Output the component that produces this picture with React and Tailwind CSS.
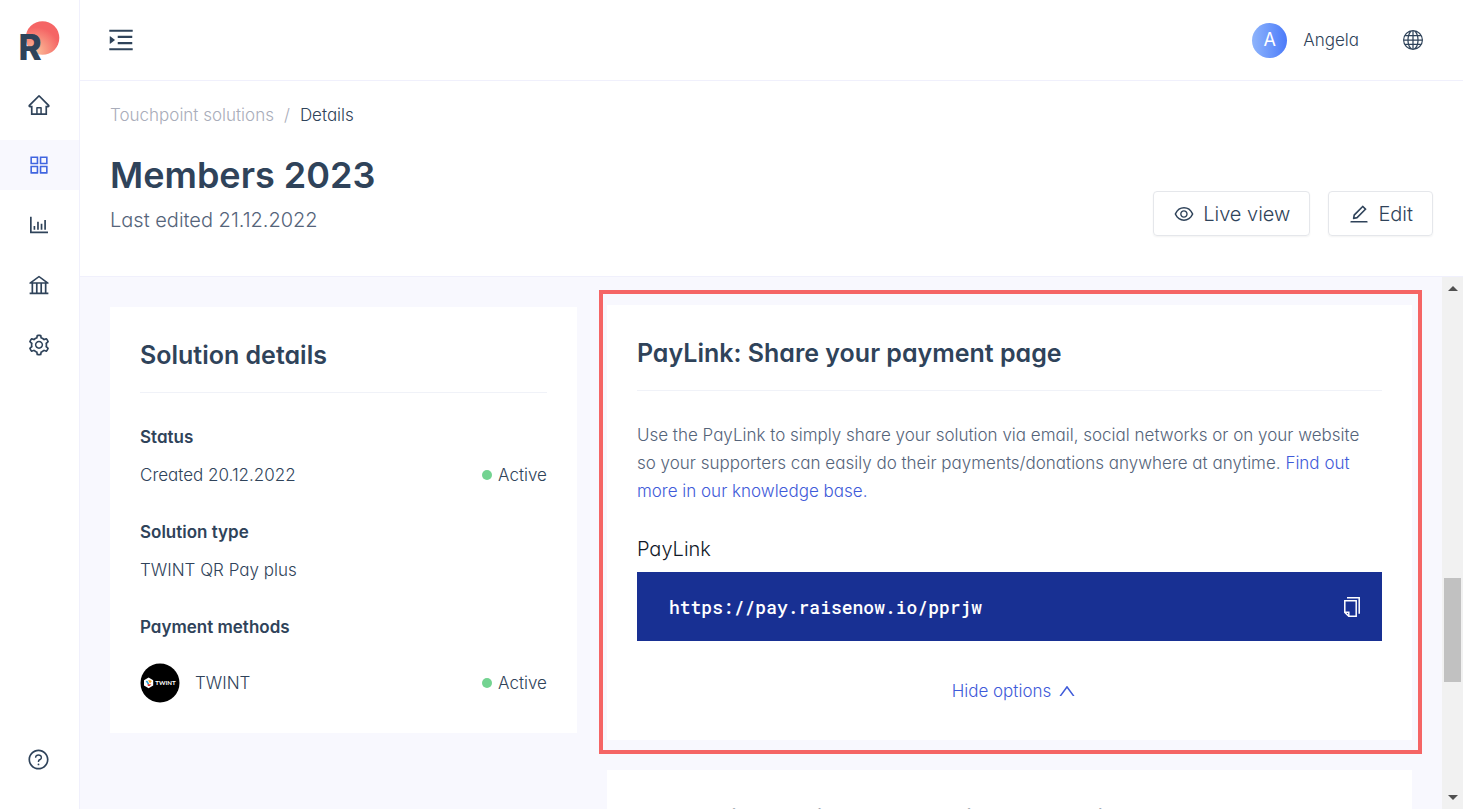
import {
  AiOutlineAppstore,
  AiOutlineBank,
  AiOutlineBarChart,
  AiOutlineEdit,
  AiOutlineEye,
  AiOutlineHome,
  AiOutlineMenuUnfold,
  AiOutlineQuestionCircle,
  AiOutlineSetting,
  AiOutlineUp,
} from 'react-icons/ai';
import { BsGlobe } from 'react-icons/bs';

const navItems = [
  { label: 'Home', icon: AiOutlineHome },
  { label: 'Touchpoint solutions', icon: AiOutlineAppstore, active: true },
  { label: 'Reports', icon: AiOutlineBarChart },
  { label: 'Bank', icon: AiOutlineBank },
  { label: 'Settings', icon: AiOutlineSetting },
];

function Logo() {
  return (
    <svg viewBox="0 0 40 40" className="size-10 overflow-visible" aria-hidden="true">
      <defs>
        <radialGradient id="sun" cx="0.3" cy="0.9" r="0.8">
          <stop offset="0" stopColor="#fbc09a" />
          <stop offset="0.9" stopColor="#f56565" />
        </radialGradient>
      </defs>
      <circle cx="22.5" cy="18" r="16.8" fill="url(#sun)" />
      <text x="-1.6" y="39.5" fontSize="35" fontWeight="800" fontFamily="Inter, sans-serif" fill="#2f435a">R</text>
    </svg>
  );
}

function TwintBadge() {
  return (
    <svg viewBox="0 0 40 40" className="size-10" aria-hidden="true">
      <circle cx="20" cy="20" r="19.5" fill="#000" />
      <path d="M8.6 14.6 13.2 17.2v5.4l-4.6 2.7L4 22.6v-5.4z" fill="#fff" />
      <path d="M5.6 18 8.2 22l1-1.2-1.8-3z" fill="#2ba6df" />
      <path d="M8 17.2 10 20.4l1.8-2.2-1.4-1z" fill="#f6a21c" />
      <path d="M7.4 21.2h4l-1.6 1.8H8z" fill="#e6332a" />
      <text x="15.2" y="22.4" fontSize="6.2" fontWeight="700" fontFamily="Lato, sans-serif" fill="#fff">TWINT</text>
    </svg>
  );
}

function CopyIcon() {
  return (
    <svg viewBox="0 0 18 22" className="h-5.5 w-4.5" fill="none" stroke="currentColor" strokeWidth="1.5" aria-hidden="true">
      <path d="M4 1.8h12.2v16" />
      <path d="M1.8 4.8h11.4v15.4H5.8l-4-3.8z" />
      <path d="M1.8 16.2h4v4" />
    </svg>
  );
}

function Sidebar() {
  return (
    <aside className="flex w-20 shrink-0 flex-col items-center border-r border-[#f0f0fc] pt-5 pb-9.5">
      <a href="#" aria-label="Dashboard"><Logo /></a>
      <nav className="mt-5 flex w-full flex-col gap-2.5">
        {navItems.map(({ label, icon: Icon, active }) => (
          <a key={label} href="#" aria-label={label}
            className={`flex h-12.5 items-center justify-center pr-0.5 ${active ? 'bg-[#f8f8fe] text-[#4065e0]' : ''}`}>
            <Icon className="size-6" />
          </a>
        ))}
      </nav>
      <button aria-label="Help" className="mt-auto mr-0.5"><AiOutlineQuestionCircle className="size-5.75" /></button>
    </aside>
  );
}

function Active() {
  return (
    <span className="flex items-center gap-1.5">
      <span className="size-2.5 rounded-full bg-[#73d391]" />
      Active
    </span>
  );
}

function CardTitle({ children }) {
  return <h2 className="border-b border-[#f0f2f8] pb-4.75 text-[25px] leading-9 font-semibold">{children}</h2>;
}

function SolutionDetails() {
  return (
    <section className="mt-0.5 self-start bg-white p-7.5">
      <CardTitle>Solution details</CardTitle>
      <dl className="mt-7.5 text-[17px] leading-7">
        <dt className="font-semibold">Status</dt>
        <dd className="mt-2.5 flex justify-between"><span>Created 20.12.2022</span><Active /></dd>
        <dt className="mt-7.25 font-semibold">Solution type</dt>
        <dd className="mt-2.5">TWINT QR Pay plus</dd>
        <dt className="mt-7.25 font-semibold">Payment methods</dt>
        <dd className="mt-5.5 flex items-center justify-between">
          <span className="flex items-center gap-3.75"><TwintBadge />TWINT</span>
          <Active />
        </dd>
      </dl>
    </section>
  );
}

function PayLink() {
  return (
    <section className="relative bg-white px-7.5 pt-7.5 pb-8.75">
      <div className="pointer-events-none absolute -top-3.75 -right-2.5 -bottom-3.5 -left-2 border-4 border-[#f56565]" />
      <CardTitle>PayLink: Share your payment page</CardTitle>
      <p className="mt-7.5 text-[17px] leading-7 text-[#55647a]">
        Use the PayLink to simply share your solution via email, social networks or on your website so your
        supporters can easily do their payments/donations anywhere at anytime.{' '}
        <a href="#" className="text-[#3f5bd9]">Find out more in our knowledge base.</a>
      </p>
      <h3 className="mt-7.5 text-xl leading-7 text-gray-900">PayLink</h3>
      <div className="mt-2.25 flex h-17.25 items-center justify-between bg-[#183093] pr-5.25 pl-8 text-white">
        <span className="font-['Roboto_Mono','Liberation_Mono',monospace] text-lg font-medium">https://pay.raisenow.io/pprjw</span>
        <button aria-label="Copy link"><CopyIcon /></button>
      </div>
      <button className="mx-auto mt-9 flex items-center gap-1.5 pl-2.5 text-[17px] leading-7 text-[#3f5bd9]">
        Hide options <AiOutlineUp className="size-5" />
      </button>
    </section>
  );
}

function Scrollbar() {
  return (
    <div className="flex w-5.25 shrink-0 flex-col items-center justify-between bg-[#f1f1f1] py-2.25" aria-hidden="true">
      <svg viewBox="0 0 10 5" className="h-1.25 w-2.5"><path d="M0 5 5 0l5 5z" fill="#505050" /></svg>
      <div className="mt-71.75 mb-auto h-26 w-4.25 bg-[#c1c1c1]" />
      <svg viewBox="0 0 10 5" className="h-1.25 w-2.5"><path d="M0 0h10L5 5z" fill="#505050" /></svg>
    </div>
  );
}

export default function App() {
  return (
    <div className="flex h-screen overflow-hidden bg-white font-['Inter',sans-serif] font-light text-[#2f435a] [font-feature-settings:'cv11']">
      <Sidebar />
      <div className="flex min-w-0 flex-1 flex-col">
        <header className="flex h-20.25 shrink-0 items-center justify-between border-b border-[#f0f0fc] pr-10 pl-6.5">
          <button aria-label="Toggle menu"><AiOutlineMenuUnfold className="size-7.5" /></button>
          <div className="flex items-center">
            <span className="flex size-8.75 items-center justify-center rounded-full bg-linear-to-r from-[#8fb4fb] to-[#4c7af9] text-lg font-normal text-white">A</span>
            <span className="ml-4 pt-0.5 text-[17px]">Angela</span>
            <button aria-label="Language" className="ml-11"><BsGlobe className="size-5" /></button>
          </div>
        </header>

        <div className="flex h-49 shrink-0 items-start justify-between border-b border-[#f0f0fc] px-7.5 pt-5">
          <div>
            <nav className="flex gap-2.5 text-[17px] leading-7">
              <a href="#" className="text-[#a9adba]">Touchpoint solutions</a>
              <span className="text-[#a9adba]">/</span>
              <span>Details</span>
            </nav>
            <h1 className="mt-4.5 text-4xl leading-14 font-semibold">Members 2023</h1>
            <p className="mt-px text-xl leading-8 text-[#55647a]">Last edited 21.12.2022</p>
          </div>
          <div className="mt-22.5 flex gap-4.5 text-xl">
            <button className="flex h-11.25 items-center gap-2 rounded border border-gray-200 px-4.75 shadow-xs">
              <AiOutlineEye className="size-5.5" /> Live view
            </button>
            <button className="flex h-11.25 items-center gap-2 rounded border border-gray-200 px-4.75 shadow-xs">
              <AiOutlineEdit className="size-5.5" /> Edit
            </button>
          </div>
        </div>

        <div className="flex min-h-0 flex-1">
          <main className="grid flex-1 grid-cols-[58fr_100fr] gap-x-7.5 overflow-hidden bg-[#f8f8fe] px-7.5 pt-7">
            <SolutionDetails />
            <div className="flex flex-col gap-7.5">
              <PayLink />
              <section className="bg-white px-7.5 pt-7.75 pb-7.5">
                <CardTitle>Customise design and email to your wishes</CardTitle>
              </section>
            </div>
          </main>
          <Scrollbar />
        </div>
      </div>
    </div>
  );
}
